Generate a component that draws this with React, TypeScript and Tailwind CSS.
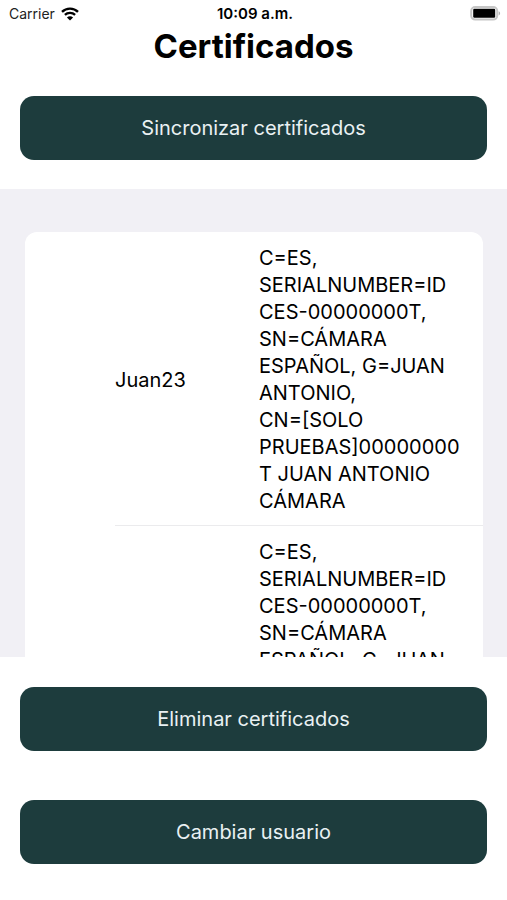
import type { ReactNode } from "react";

const subject = [
  "C=ES,",
  "SERIALNUMBER=ID",
  "CES-00000000T,",
  "SN=CÁMARA",
  "ESPAÑOL, G=JUAN",
  "ANTONIO,",
  "CN=[SOLO",
  "PRUEBAS]00000000",
  "T JUAN ANTONIO",
  "CÁMARA",
].join("\n");

const certificates = [
  { alias: "Juan23", subject },
  { alias: "", subject },
];

function WifiIcon() {
  return (
    <svg width="18" height="14" viewBox="0 0 18 14" fill="none" stroke="#000" aria-label="Wi-Fi" role="img">
      <path d="M1 4.8C5.4 .5 12.6 .5 17 4.8" strokeWidth="2.4" />
      <path d="M3.9 7.9C6.7 5.2 11.3 5.2 14.1 7.9" strokeWidth="2.3" />
      <path d="M9 13.6L5.9 10.5C7.6 8.8 10.4 8.8 12.1 10.5Z" fill="#000" stroke="none" />
    </svg>
  );
}

function BatteryIcon() {
  return (
    <svg width="31" height="15" viewBox="0 0 31 15" aria-label="Batería" role="img">
      <rect x="1.2" y="1" width="26" height="12.6" rx="4" fill="#fff" stroke="#c6c6c6" strokeWidth="2" />
      <rect x="3.2" y="2.8" width="22" height="9" rx="1.2" fill="#000" />
      <path d="M28.7 5.2C30.6 5.9 30.6 8.7 28.7 9.4Z" fill="#b0b0b0" />
    </svg>
  );
}

function ActionButton({ children }: { children: ReactNode }) {
  return (
    <button type="button" className="h-16 w-full rounded-[14px] bg-[#1d3c3d] text-xl text-[#e9f1f3]">
      {children}
    </button>
  );
}

export default function App() {
  return (
    <div className="flex h-screen flex-col bg-white font-['Inter',sans-serif] text-black">
      <header>
        <div className="grid h-[27px] grid-cols-3 items-center pr-1.5 pl-[9px] text-sm">
          <div className="flex items-center gap-1.5 text-[#222]">
            <span>Carrier</span>
            <WifiIcon />
          </div>
          <time className="text-center text-[15px] font-semibold">10:09 a.m.</time>
          <div className="flex justify-end">
            <BatteryIcon />
          </div>
        </div>
        <h1 className="text-center text-[33px] leading-[38px] font-bold">Certificados</h1>
        <div className="px-5 pt-[31px] pb-[29px]">
          <ActionButton>Sincronizar certificados</ActionButton>
        </div>
      </header>

      <main className="min-h-0 flex-1 overflow-y-auto bg-[#f1f0f5] pt-[43px] pr-6 pl-[25px] [scrollbar-width:none]">
        <div className="rounded-xl bg-white pl-[90px]">
          <table className="w-full table-fixed text-left text-xl leading-[27px]">
            <tbody>
              {certificates.map((certificate, index) => (
                <tr key={index} className="border-b border-[#ebebed]">
                  <th scope="row" className="w-36 pt-[13px] pb-2.5 font-normal">
                    {certificate.alias}
                  </th>
                  <td className="pt-[13px] pb-2.5 whitespace-pre">{certificate.subject}</td>
                </tr>
              ))}
            </tbody>
          </table>
        </div>
      </main>

      <footer className="flex flex-col gap-[49px] px-5 pt-[30px] pb-9">
        <ActionButton>Eliminar certificados</ActionButton>
        <ActionButton>Cambiar usuario</ActionButton>
      </footer>
    </div>
  );
}
